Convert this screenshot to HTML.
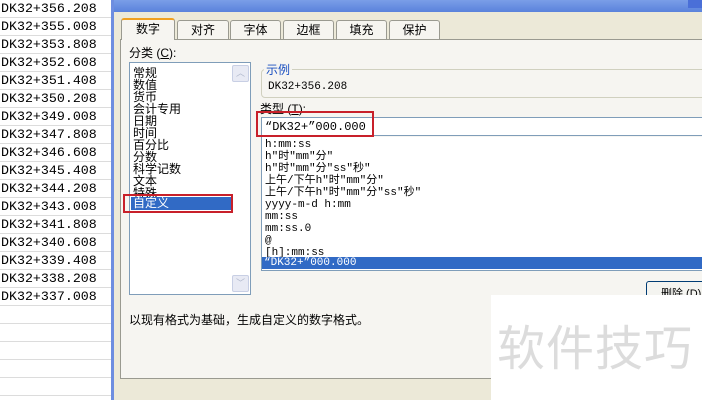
<!DOCTYPE html>
<html><head><meta charset="utf-8"><style>
*{margin:0;padding:0;box-sizing:border-box}
body{width:702px;height:400px;overflow:hidden;position:relative;background:#fff;font-family:"Liberation Sans","Noto Sans CJK SC",sans-serif;font-size:12px;color:#000}
.abs{position:absolute}
.cells div{position:absolute;left:0;width:111px;height:18px;border-bottom:1px solid #dcdcdc;font-family:"Liberation Mono","Noto Sans CJK SC",monospace;font-size:13.3px;line-height:17px;padding-left:1px}
.tab{position:absolute;top:20px;height:19px;background:#f6f5f0;border:1px solid #9a9a90;border-bottom:none;border-radius:3px 3px 0 0;text-align:center;line-height:18px;font-size:12px}
.mono{font-family:"Liberation Mono","Noto Sans CJK SC",monospace;font-size:11px}
</style></head><body>
<div class="cells">
<div style="top:0">DK32+356.208</div><div style="top:18px">DK32+355.008</div><div style="top:36px">DK32+353.808</div><div style="top:54px">DK32+352.608</div><div style="top:72px">DK32+351.408</div><div style="top:90px">DK32+350.208</div><div style="top:108px">DK32+349.008</div><div style="top:126px">DK32+347.808</div><div style="top:144px">DK32+346.608</div><div style="top:162px">DK32+345.408</div><div style="top:180px">DK32+344.208</div><div style="top:198px">DK32+343.008</div><div style="top:216px">DK32+341.808</div><div style="top:234px">DK32+340.608</div><div style="top:252px">DK32+339.408</div><div style="top:270px">DK32+338.208</div><div style="top:288px">DK32+337.008</div>
<div style="top:306px"></div><div style="top:324px"></div><div style="top:342px"></div><div style="top:360px"></div><div style="top:378px"></div>
</div>
<div class="abs" style="left:111px;top:0;width:591px;height:400px;background:#ece9d8;border-left:3px solid #6e8ee0"></div>
<div class="abs" style="left:114px;top:0;width:588px;height:12px;background:linear-gradient(#7a9ee8,#5a82dc)"></div>
<div class="abs" style="left:688px;top:0;width:14px;height:8px;background:#4a6fd8"></div>
<div class="abs" style="left:120px;top:39px;width:590px;height:340px;background:#f6f5f1;border:1px solid #9a9a90"></div>
<div class="tab" style="left:121px;width:54px;top:18px;height:22px;background:#f6f5f1;border-top:2px solid #f0a020;z-index:2">数字</div>
<div class="tab" style="left:177px;width:52px">对齐</div>
<div class="tab" style="left:230px;width:51px">字体</div>
<div class="tab" style="left:283px;width:51px">边框</div>
<div class="tab" style="left:336px;width:51px">填充</div>
<div class="tab" style="left:389px;width:51px">保护</div>
<div class="abs" style="left:129px;top:44px">分类 (<u>C</u>):</div>
<div class="abs" style="left:129px;top:62px;width:122px;height:233px;background:#fff;border:1px solid #7f9db9;line-height:12px;padding:4px 0 0 3px">常规<br>数值<br>货币<br>会计专用<br>日期<br>时间<br>百分比<br>分数<br>科学记数<br>文本<br>特殊</div>
<div class="abs" style="left:232px;top:65px;width:17px;height:17px;background:#e8eaf4;border:1px solid #c8cfe4;border-radius:2px;color:#b0b8cc;font-size:9px;text-align:center;line-height:15px">︿</div>
<div class="abs" style="left:232px;top:275px;width:17px;height:17px;background:#e8eaf4;border:1px solid #c8cfe4;border-radius:2px;color:#b0b8cc;font-size:9px;text-align:center;line-height:15px">﹀</div>
<div class="abs" style="left:131px;top:197px;width:100px;height:13px;background:#316ac5;color:#fff;line-height:12px;padding-left:2px">自定义</div>
<div class="abs" style="left:123px;top:194px;width:110px;height:19px;border:2px solid #c8202a"></div>
<div class="abs" style="left:261px;top:69px;width:450px;height:29px;border:1px solid #d0d0bf;border-radius:4px"></div>
<div class="abs" style="left:264px;top:61px;background:#f6f5f1;color:#1a4fc0;padding:0 2px">示例</div>
<div class="abs mono" style="left:268px;top:81px">DK32+356.208</div>
<div class="abs" style="left:260px;top:100px">类型 (<u>T</u>):</div>
<div class="abs" style="left:261px;top:117px;width:450px;height:19px;background:#fff;border:1px solid #7f9db9"></div>
<div class="abs mono" style="left:265px;top:120px;font-size:12px">“DK32+”000.000</div>
<div class="abs" style="left:256px;top:111px;width:118px;height:26px;border:2px solid #c8202a"></div>
<div class="abs mono" style="left:261px;top:137px;width:450px;height:134px;background:#fff;border:1px solid #7f9db9;border-top:none;line-height:12px;padding:2px 0 0 3px">h:mm:ss<br>h"时"mm"分"<br>h"时"mm"分"ss"秒"<br>上午/下午h"时"mm"分"<br>上午/下午h"时"mm"分"ss"秒"<br>yyyy-m-d h:mm<br>mm:ss<br>mm:ss.0<br>@<br>[h]:mm:ss</div>
<div class="abs mono" style="left:262px;top:257px;width:450px;height:12px;background:#316ac5;color:#fff;line-height:12px;padding-left:2px">“DK32+”000.000</div>
<div class="abs" style="left:646px;top:281px;width:70px;height:22px;background:#f4f4f0;border:1px solid #003c74;border-radius:3px;padding:3px 0 0 14px;font-size:11px">删除 (D)</div>
<div class="abs" style="left:129px;top:311px">以现有格式为基础，生成自定义的数字格式。</div>
<div class="abs" style="left:491px;top:295px;width:211px;height:105px;background:#fff"></div>
<div class="abs" style="left:497px;top:316px;font-size:48px;line-height:56px;color:#dcdcdc;letter-spacing:1px;font-family:'Noto Sans CJK SC',sans-serif">软件技巧</div>
</body></html>
